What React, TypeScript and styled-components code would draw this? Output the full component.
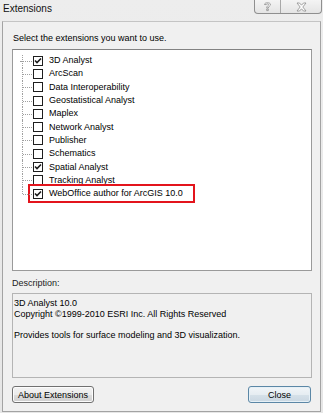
import React from "react";
import styled, { createGlobalStyle } from "styled-components";

const GlobalStyle = createGlobalStyle`
  html, body {
    margin: 0;
    padding: 0;
    background: #e9e9e9;
  }
  body {
    font-family: "Liberation Sans", Arial, sans-serif;
    color: #000;
  }
`;

interface Extension {
  name: string;
  checked: boolean;
  highlight?: boolean;
}

const extensions: Extension[] = [
  { name: "3D Analyst", checked: true },
  { name: "ArcScan", checked: false },
  { name: "Data Interoperability", checked: false },
  { name: "Geostatistical Analyst", checked: false },
  { name: "Maplex", checked: false },
  { name: "Network Analyst", checked: false },
  { name: "Publisher", checked: false },
  { name: "Schematics", checked: false },
  { name: "Spatial Analyst", checked: true },
  { name: "Tracking Analyst", checked: false },
  { name: "WebOffice author for ArcGIS 10.0", checked: true, highlight: true },
];

const CheckMark = () => (
  <svg width="8" height="8" viewBox="0 0 8 8">
    <path d="M1 3.5 L3 5.5 L7 1.5" fill="none" stroke="#1a1a1a" strokeWidth="1.6" />
  </svg>
);

const HelpGlyph = () => (
  <svg width="9" height="11" viewBox="0 0 9 11">
    <path
      d="M1.5 3.5 C1.5 1.2 7.5 1.2 7.5 3.5 C7.5 5 5.3 5.2 5.3 7 L3.7 7 C3.7 4.8 5.8 4.6 5.8 3.6 C5.8 2.6 3.2 2.6 3.2 3.6 Z M3.7 8 L5.3 8 L5.3 9.6 L3.7 9.6 Z"
      fill="#fff"
      stroke="#8c8c8c"
      strokeWidth="0.8"
    />
  </svg>
);

const CloseGlyph = () => (
  <svg width="11" height="10" viewBox="0 0 11 10">
    <path
      d="M1 1 L3.5 1 L5.5 3.2 L7.5 1 L10 1 L6.8 5 L10 9 L7.5 9 L5.5 6.8 L3.5 9 L1 9 L4.2 5 Z"
      fill="#fff"
      stroke="#8c8c8c"
      strokeWidth="0.8"
    />
  </svg>
);

const App: React.FC = () => {
  return (
    <>
      <GlobalStyle />
      <Window>
        <TitleBar>
          <Title>Extensions</Title>
          <CaptionButtons>
            <CaptionButton $width={25}>
              <HelpGlyph />
            </CaptionButton>
            <CaptionButton $width={40}>
              <CloseGlyph />
            </CaptionButton>
          </CaptionButtons>
        </TitleBar>
        <Panel>
          <Prompt>Select the extensions you want to use.</Prompt>
          <ListBox>
            <Tree>
              {extensions.map((ext, i) => (
                <Row key={ext.name} $first={i === 0} $last={i === extensions.length - 1}>
                  <Item $highlight={ext.highlight}>
                    <CheckBox>{ext.checked && <CheckMark />}</CheckBox>
                    <ItemLabel>{ext.name}</ItemLabel>
                  </Item>
                </Row>
              ))}
            </Tree>
          </ListBox>
          <SectionLabel>Description:</SectionLabel>
          <DescriptionBox>
            <DescLine>3D Analyst 10.0</DescLine>
            <DescLine>Copyright &#169;1999-2010 ESRI Inc. All Rights Reserved</DescLine>
            <DescLine>&nbsp;</DescLine>
            <DescLine>Provides tools for surface modeling and 3D visualization.</DescLine>
          </DescriptionBox>
          <ButtonRow>
            <Button $width={82}>About Extensions</Button>
            <Button $width={63} $default>
              Close
            </Button>
          </ButtonRow>
        </Panel>
      </Window>
    </>
  );
};

export default App;

const Window = styled.div`
  width: 323px;
  height: 413px;
  box-sizing: border-box;
  display: flex;
  flex-direction: column;
  background: linear-gradient(#ededed, #e6e6e6);
  overflow: hidden;
`;

const TitleBar = styled.div`
  height: 21px;
  display: flex;
  align-items: flex-start;
  justify-content: space-between;
  padding-left: 3px;
`;

const Title = styled.div`
  font-size: 10px;
  line-height: 12px;
  margin-top: 3px;
  color: #111;
`;

const CaptionButtons = styled.div`
  display: flex;
  margin-right: 1px;
  border: 1px solid #8f8f8f;
  border-top: none;
  border-radius: 0 0 4px 4px;
  background: linear-gradient(#f4f4f4, #e4e4e4);
  overflow: hidden;
`;

const CaptionButton = styled.div<{ $width: number }>`
  width: ${(p) => p.$width}px;
  height: 13px;
  display: flex;
  align-items: center;
  justify-content: center;
  & + & {
    border-left: 1px solid #a8a8a8;
  }
`;

const Panel = styled.div`
  flex: 1;
  margin: 0 2px 1px 2px;
  border: 1px solid #a3a3a3;
  border-top-color: #c4c4c4;
  background: #f0f0f0;
  padding: 10px 8px 8px 9px;
  display: flex;
  flex-direction: column;
`;

const Prompt = styled.div`
  font-size: 9px;
  line-height: 12px;
  padding-left: 1px;
`;

const ListBox = styled.div`
  margin-top: 5px;
  height: 222px;
  box-sizing: border-box;
  border: 1px solid #9a9a9a;
  border-top-color: #828282;
  background: #fff;
  padding: 4px 0 0 0;
`;

const Tree = styled.div`
  display: flex;
  flex-direction: column;
`;

const Row = styled.div<{ $first: boolean; $last: boolean }>`
  position: relative;
  height: 13.3px;
  display: flex;
  align-items: center;
  padding-left: 20px;

  &::before {
    content: "";
    position: absolute;
    left: 9px;
    top: ${(p) => (p.$first ? "1px" : "0")};
    height: ${(p) => (p.$last ? "50%" : "100%")};
    border-left: 1px dotted #a0a0a0;
  }

  &::after {
    content: "";
    position: absolute;
    left: ${(p) => (p.$first ? "7px" : "10px")};
    width: ${(p) => (p.$first ? "12px" : "9px")};
    top: 50%;
    border-top: 1px dotted #a0a0a0;
  }
`;

const Item = styled.div<{ $highlight?: boolean }>`
  display: flex;
  align-items: center;
  gap: 6px;
  ${(p) =>
    p.$highlight &&
    `
    outline: 2px solid #e3141c;
    outline-offset: 1px;
    padding: 1px 9px 1px 2px;
    margin-left: -2px;
  `}
`;

const CheckBox = styled.div`
  width: 10px;
  height: 10px;
  box-sizing: border-box;
  border: 1px solid #1e1e1e;
  background: #fff;
  display: flex;
  align-items: center;
  justify-content: center;
`;

const ItemLabel = styled.span`
  font-size: 9px;
  line-height: 11px;
  white-space: nowrap;
`;

const SectionLabel = styled.div`
  margin-top: 6px;
  font-size: 9px;
  line-height: 12px;
  color: #222;
`;

const DescriptionBox = styled.div`
  margin-top: 4px;
  height: 85px;
  box-sizing: border-box;
  border: 1px solid #b4b4b4;
  background: #f0f0f0;
  padding: 4px 1px;
`;

const DescLine = styled.div`
  font-size: 9px;
  line-height: 10.5px;
  white-space: nowrap;
`;

const ButtonRow = styled.div`
  margin-top: 8px;
  display: flex;
  justify-content: space-between;
  padding-right: 1px;
`;

const Button = styled.button<{ $width: number; $default?: boolean }>`
  width: ${(p) => p.$width}px;
  height: 17px;
  padding: 0;
  font-family: "Liberation Sans", Arial, sans-serif;
  font-size: 9px;
  color: #000;
  border-radius: 3px;
  border: 1px solid ${(p) => (p.$default ? "#5b87a6" : "#707070")};
  box-shadow: inset 0 0 0 1px ${(p) => (p.$default ? "#e6f0f6" : "#fcfcfc")};
  background: ${(p) =>
    p.$default
      ? "linear-gradient(#f1f5f8 0%, #e6edf2 50%, #d6e1e9 51%, #c9d7e2 100%)"
      : "linear-gradient(#f2f2f2 0%, #ebebeb 50%, #dddddd 51%, #cfcfcf 100%)"};
`;
